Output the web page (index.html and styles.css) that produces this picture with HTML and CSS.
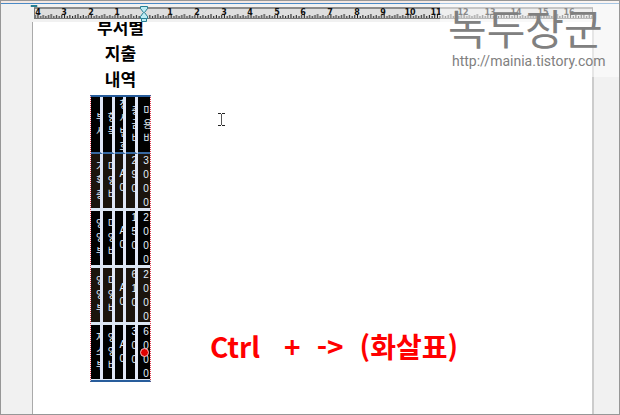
FILE: index.html
```html
<!DOCTYPE html>
<html lang="ko">
<head>
<meta charset="utf-8">
<title>부서별 지출내역</title>
<link rel="stylesheet" href="styles.css">
</head>
<body>
<div class="app">
  <div class="toolbar-edge"></div>
  <div class="ruler">
    <svg class="scale" height="20" aria-hidden="true">
      <defs>
        <pattern id="ticks" x="111" y="0" width="26.63" height="20" patternUnits="userSpaceOnUse">
          <path d="M.5 9v4M3.2 11v2M5.8 10v3M8.5 11v2M11.1 10v3M13.8 9v4M16.5 11v2M19.1 10v3M21.8 11v2M24.4 10v3" stroke="#111" stroke-width="1"/>
        </pattern>
      </defs>
      <rect x="1" y="3" width="559" height="11" fill="#dedede"/>
      <rect x="1" y="2" width="559" height="2" fill="#8c8c8c"/>
      <rect x="1" y="4" width="559" height="9" fill="url(#ticks)"/>
      <path d="M1.5 3v11M1 13.5h559" stroke="#777" fill="none"/>
      <path d="M559.5 3v11" stroke="#777"/>
      <g class="numbers">
        <text x="5" y="10">4</text><text x="31" y="10">3</text><text x="58" y="10">2</text><text x="84" y="10">1</text>
        <text x="137" y="10">1</text><text x="164" y="10">2</text><text x="191" y="10">3</text><text x="217" y="10">4</text>
        <text x="244" y="10">5</text><text x="270" y="10">6</text><text x="297" y="10">7</text><text x="324" y="10">8</text>
        <text x="350" y="10">9</text><text x="377" y="10">10</text><text x="403" y="10">11</text><text x="430" y="10">12</text>
        <text x="457" y="10">13</text><text x="483" y="10">14</text><text x="510" y="10">15</text><text x="536" y="10">16</text>
      </g>
      <path d="M-2 .5h6v1h-6z" fill="#a9dce6" stroke="#267d91"/>
      <g fill="#bdebf3" stroke="#287f94">
        <path d="M107.5 1.5h7v2l-3 4 3 4v2h-7v-2l3-4-3-4z"/>
        <path d="M108.5 13.5h5v3h-5z"/>
      </g>
    </svg>
  </div>
  <main class="workspace">
    <article class="page">
      <h1 class="title">부서별<br>지출<br>내역</h1>
      <table class="ledger">
        <thead>
          <tr>
            <th><div>부<br>서</div></th><th><div>항<br>목</div></th><th><div>청<br>사<br>번<br>호</div></th><th><div>총<br>금<br>비</div></th><th><div>미<br>용<br>비</div></th>
          </tr>
        </thead>
        <tbody>
          <tr class="alt"><td><div>기<br>획<br>총</div></td><td><div>미<br>영<br>비</div></td><td><div>A<br>0</div></td><td class="top"><div>2,<br>9<br>0</div></td><td class="top"><div>3<br>0<br>0<br>0</div></td></tr>
          <tr><td><div>영<br>영<br>부</div></td><td><div>미<br>영<br>비</div></td><td><div>A<br>0</div></td><td class="top"><div>1,<br>5<br>0</div></td><td class="top"><div>2<br>0<br>0<br>0</div></td></tr>
          <tr class="alt"><td><div>영<br>영<br>부</div></td><td><div>미<br>영<br>비</div></td><td><div>A<br>0</div></td><td class="top"><div>6,<br>1<br>0</div></td><td class="top"><div>2<br>0<br>0<br>0</div></td></tr>
          <tr><td><div>자<br>소<br>부</div></td><td><div>영<br>영<br>비</div></td><td><div>A<br>0</div></td><td class="top"><div>3,<br>0<br>0</div></td><td class="top"><div>6<br>0<br>0<br>0</div></td></tr>
        </tbody>
      </table>
      <svg class="caret" width="7" height="13" aria-hidden="true"><path d="M0 .5h3M4 .5h3M0 12.5h3M4 12.5h3" stroke="#222"/><path d="M3.5 1v11" stroke="#555"/></svg>
      <i class="handle"></i>
      <p class="hint"><span>Ctrl</span><span>+</span><span>-&gt;</span><span>(화살표)</span></p>
    </article>
  </main>
  <div class="watermark">
    <div class="brand">녹두장군</div>
    <div class="url">http://mainia.tistory.com</div>
  </div>
</div>
</body>
</html>
```
FILE: styles.css
```css
* { box-sizing: border-box; }

body {
  margin: 0;
  font-family: "Liberation Sans", "Noto Sans CJK KR", sans-serif;
  background: #f1f1f1;
}

.app {
  position: relative;
  display: flex;
  flex-direction: column;
  height: 100vh;
  overflow: hidden;
  border: 1px solid #979797;
  background: #f1f1f1;
}

.toolbar-edge {
  height: 3px;
  flex: none;
  background: #f4e8e3;
  border-bottom: 1px solid #4a8ac6;
}

.ruler {
  flex: none;
  height: 18px;
  padding: 1px 0 0 32px;
}

.scale {
  display: block;
  position: relative;
  z-index: 1;
  width: 100%;
  overflow: visible;
}

.numbers {
  font: bold 8px "DejaVu Sans", sans-serif;
  text-anchor: middle;
  fill: #111;
}

.workspace {
  flex: 1;
  min-height: 0;
  padding: 0 25px 0 31px;
}

.page {
  position: relative;
  height: 100%;
  overflow: hidden;
  background: #fff;
  border-left: 1px solid #aaa;
  border-right: 2px solid #ccc;
  padding-left: 57px;
}

.title {
  width: 61px;
  margin: -8px 0 3px;
  font: bold 17px/26px "Noto Sans CJK KR", sans-serif;
  text-align: center;
  white-space: nowrap;
  color: #000;
}

.ledger {
  width: 61px;
  table-layout: fixed;
  border-collapse: separate;
  border-spacing: 0;
  border-left: 1px dotted #e04050;
  border-right: 1px dotted #e04050;
  border-top: 2px solid #285d9c;
  border-bottom: 2px solid #285d9c;
  font: 10px/14px "Liberation Sans", "Noto Sans CJK KR", sans-serif;
  color: #e4f0fb;
}

.ledger th,
.ledger td {
  height: 57px;
  padding: 0;
  overflow: hidden;
  font-weight: normal;
  vertical-align: middle;
  background: #000;
  border-right: 3px solid #e0e7f7;
  border-bottom: 3px solid #dce6f3;
}

.ledger th { border-bottom: 2px solid #3768a2; }
.ledger .alt td { background: #1b140d; }
.ledger tbody tr:last-child td {
  height: 55px;
  border-bottom-width: 1px;
}
.ledger th:last-child,
.ledger td:last-child { border-right: 0; }
.ledger .top { vertical-align: top; }

.ledger div {
  height: 54px;
  padding-left: 5px;
  overflow: hidden;
  white-space: nowrap;
  align-content: center;
}

.ledger .top div { align-content: start; }

.caret {
  position: absolute;
  left: 185px;
  top: 91px;
}

.handle {
  position: absolute;
  left: 107px;
  top: 326px;
  width: 9px;
  height: 9px;
  border: 1px solid #fbb;
  border-radius: 50%;
  background: #e00000;
}

.hint {
  position: absolute;
  left: 177px;
  top: 308px;
  display: flex;
  gap: 16px;
  margin: 0;
  font: bold 28px/32px "Noto Sans CJK KR", sans-serif;
  color: #f00;
  white-space: nowrap;
}

.hint span:first-child { margin-right: 8px; }

.watermark {
  position: absolute;
  z-index: 2;
  top: 0;
  right: 0;
  width: 179px;
  height: 76px;
  padding: 0 0 0 8px;
  background: rgba(255, 255, 255, 0.5);
  color: #808080;
  white-space: nowrap;
}

.brand {
  font: 400 42px/51px "Noto Sans CJK KR", sans-serif;
}

.url {
  padding-left: 4px;
  font: 14px/18px Roboto, "Liberation Sans", sans-serif;
}
```
